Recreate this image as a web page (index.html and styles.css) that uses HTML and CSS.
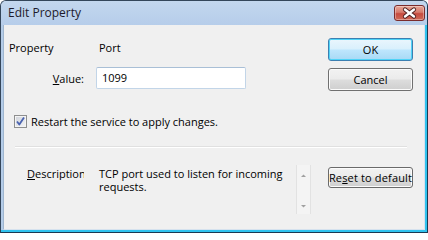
FILE: index.html
```html
<!DOCTYPE html>
<html>
<head>
<meta charset="utf-8">
<link rel="stylesheet" href="styles.css">
</head>
<body>
<div class="window">
  <div class="titlebar">
    <span class="title">Edit Property</span>
    <div class="close">
      <svg width="31" height="16" viewBox="0 0 31 16">
        <path d="M11 4.5 L20 11.5 M20 4.5 L11 11.5" stroke="#4a1f1f" stroke-width="4.2" stroke-linecap="round" fill="none"/>
        <path d="M11 4.5 L20 11.5 M20 4.5 L11 11.5" stroke="#ffffff" stroke-width="2.4" stroke-linecap="round" fill="none"/>
      </svg>
    </div>
  </div>
  <div class="client">
    <div class="top">
      <div class="fields">
        <div class="prop-row">
          <span class="prop-label">Property</span>
          <span class="prop-value">Port</span>
        </div>
        <div class="value-row">
          <label class="value-label"><u>V</u>alue:</label>
          <div class="input">1099</div>
        </div>
      </div>
      <div class="buttons">
        <div class="btn btn-default">OK</div>
        <div class="btn">Cancel</div>
      </div>
    </div>
    <div class="check-row">
      <span class="checkbox">
        <svg width="11" height="11" viewBox="0 0 11 11">
          <path d="M2 5.5 L4.3 8.5 L9 1.5" stroke="#4a63b0" stroke-width="1.8" fill="none" stroke-linejoin="round"/>
        </svg>
      </span>
      <span class="check-text">Restart the service to apply changes.</span>
    </div>
    <div class="separator"></div>
    <div class="desc-row">
      <span class="desc-label"><u>D</u>escription</span>
      <div class="desc-text">TCP port used to listen for incoming requests.</div>
      <div class="scrollbar">
        <svg width="15" height="49" viewBox="0 0 15 49">
          <path d="M5 12 L7.5 9.5 L10 12 Z" fill="#a0a0a0"/>
          <path d="M5 40 L7.5 42.5 L10 40 Z" fill="#a0a0a0"/>
        </svg>
      </div>
      <div class="btn btn-reset">Re<u>s</u>et to default</div>
    </div>
  </div>
</div>
</body>
</html>
```

FILE: styles.css
```css
html, body {
  margin: 0;
  padding: 0;
  background: #ffffff;
}
body {
  font-family: "Open Sans", "Noto Sans", sans-serif;
  font-size: 11px;
  color: #000000;
}
.window {
  box-sizing: border-box;
  width: 428px;
  height: 233px;
  border: 1px solid #34465a;
  border-right-color: #1b3a52;
  border-bottom-color: #1b3a52;
  border-radius: 6px 6px 0 0;
  padding: 0 2px 2px 2px;
  background: #b4cce8;
  box-shadow: inset -2px -2px 0 #2fc2ee;
  display: flex;
  flex-direction: column;
  overflow: hidden;
}
.titlebar {
  height: 24px;
  display: flex;
  align-items: flex-start;
  justify-content: space-between;
  margin: 0 -2px;
  padding: 0 2px;
  background: linear-gradient(#c3d7ee, #b6cdea);
}
.title {
  margin-left: 5px;
  margin-top: 4px;
  font-size: 12px;
  line-height: 16px;
  color: #1d1a2c;
}
.close {
  box-sizing: border-box;
  width: 31px;
  height: 16px;
  margin-top: 4px;
  border: 1px solid #7a2c2c;
  border-radius: 3px;
  background: linear-gradient(#e8a898 0%, #d67a6c 45%, #c64b3f 55%, #cf6a58 100%);
  box-shadow: inset 0 0 0 1px rgba(255,255,255,0.35);
  display: flex;
  align-items: center;
  justify-content: center;
  overflow: hidden;
}
.close svg {
  display: block;
  margin: -1px;
}
.client {
  flex: 1;
  background: #f0f0f0;
  border-left: 1px solid #9fb6cf;
  border-right: 1px solid #d6e2ee;
  border-bottom: 1px solid #d6e2ee;
  padding: 13px 11px 0 5px;
  display: flex;
  flex-direction: column;
}
.top {
  display: flex;
  justify-content: space-between;
}
.fields {
  display: flex;
  flex-direction: column;
}
.prop-row {
  display: flex;
  margin-top: 2px;
  height: 15px;
  line-height: 15px;
}
.prop-label {
  width: 90px;
}
.value-row {
  display: flex;
  align-items: center;
  margin-top: 12px;
}
.value-label {
  box-sizing: border-box;
  width: 87px;
  padding-right: 12px;
  text-align: right;
}
.input {
  box-sizing: border-box;
  width: 150px;
  height: 22px;
  background: #ffffff;
  border: 1px solid #c2d5e8;
  border-top-color: #a9bfd6;
  border-radius: 2px;
  padding-left: 5px;
  line-height: 20px;
}
.buttons {
  display: flex;
  flex-direction: column;
  gap: 7px;
}
.btn {
  box-sizing: border-box;
  width: 85px;
  height: 23px;
  border: 1px solid #707070;
  border-radius: 3px;
  background: linear-gradient(#f2f2f2 0%, #ebebeb 48%, #dddddd 52%, #cfcfcf 100%);
  box-shadow: inset 0 0 0 1px #fbfbfb;
  display: flex;
  align-items: center;
  justify-content: center;
  line-height: 15px;
}
.btn-default {
  border-color: #3c7fb1;
  background: linear-gradient(#eaf6fd 0%, #d9f0fc 48%, #bee6fd 52%, #a7d9f5 100%);
  box-shadow: inset 0 0 0 1px #4fd3f7;
}
.check-row {
  display: flex;
  align-items: center;
  margin-top: 24px;
  margin-left: 5px;
  height: 13px;
}
.checkbox {
  box-sizing: border-box;
  width: 13px;
  height: 13px;
  border: 1px solid #8e8f8f;
  background: linear-gradient(135deg, #cfd3da, #f4f5f7);
  box-shadow: inset 0 0 0 1px #f4f4f4;
  display: flex;
  align-items: center;
  justify-content: center;
}
.checkbox svg {
  display: block;
}
.check-text {
  margin-left: 4px;
  line-height: 15px;
}
.separator {
  height: 1px;
  margin: 18px 6px 0 6px;
  background: #e0e0e0;
  border-bottom: 1px solid #ffffff;
}
.desc-row {
  display: flex;
  align-items: flex-start;
  margin-top: 17px;
  padding-left: 18px;
}
.desc-label {
  width: 57px;
  overflow: hidden;
  white-space: nowrap;
  margin-top: 2px;
  line-height: 13px;
  margin-right: 15px;
}
.desc-text {
  width: 197px;
  margin-top: 2px;
  line-height: 13px;
  padding-right: 4px;
  box-sizing: border-box;
}
.scrollbar {
  box-sizing: border-box;
  width: 15px;
  height: 49px;
  background: #f4f4f4;
  border-left: 1px solid #e2e2e2;
  border-right: 1px solid #e2e2e2;
  margin-right: 17px;
}
.scrollbar svg {
  display: block;
  margin-left: -1px;
}
.btn-reset {
  height: 21px;
  margin-top: 2px;
  border-color: #6a6a6a;
  white-space: nowrap;
  letter-spacing: 0.15px;
}
```
